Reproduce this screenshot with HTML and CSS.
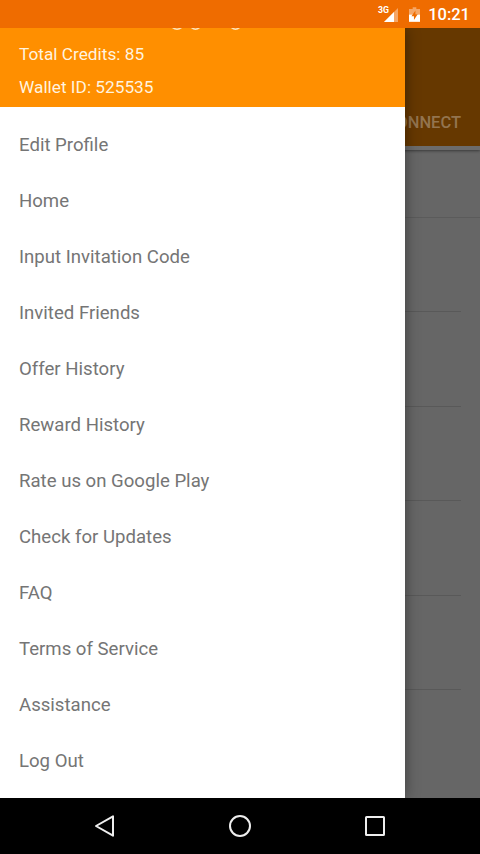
FILE: index.html
```html
<!DOCTYPE html>
<html lang="en">
<head>
<meta charset="utf-8">
<title>Menu</title>
<link rel="stylesheet" href="styles.css">
</head>
<body>
<div class="phone">
  <header class="status">
    <svg class="signal" width="20" height="18" viewBox="0 0 20 18">
      <path d="M20 3V17H6Z" fill="#fff" opacity=".4"/>
      <path d="M16 7V17H6Z" fill="#fff"/>
      <text class="network" x="0" y="8" textLength="11" lengthAdjust="spacingAndGlyphs">3G</text>
    </svg>
    <svg class="battery" width="11" height="15" viewBox="0 0 12 16">
      <path d="M4 0H8V2H12V8H0V2H4Z" fill="#fff" opacity=".4"/>
      <path d="M0 8H12V16H0Z" fill="#fff"/>
      <path d="M7 3.5L2.7 10H5.4V14L9.5 7.8H7Z" fill="#ef6c00"/>
    </svg>
    <span class="clock">10:21</span>
  </header>
  <main class="screen">
    <div class="page">
      <div class="toolbar"><span class="tab">CONNECT</span></div>
      <div class="strip"></div>
      <div class="intro"></div>
      <div class="rows">
        <div class="row"></div>
        <div class="row"></div>
        <div class="row"></div>
        <div class="row"></div>
        <div class="row"></div>
      </div>
    </div>
    <aside class="drawer">
      <div class="account">
        <svg class="descenders" width="72" height="3" viewBox="0 0 72 3">
          <path d="M1 -1Q6 3.5 11 -1M20 -1Q24.500 3.500 29 -1M60 -1Q64.500 3.500 69 -1" fill="none" stroke="#ffe3bd" stroke-width="1.600"/>
        </svg>
        <p>Total Credits: 85</p>
        <p>Wallet ID: 525535</p>
      </div>
      <nav class="menu">
        <a>Edit Profile</a>
        <a>Home</a>
        <a>Input Invitation Code</a>
        <a>Invited Friends</a>
        <a>Offer History</a>
        <a>Reward History</a>
        <a>Rate us on Google Play</a>
        <a>Check for Updates</a>
        <a>FAQ</a>
        <a>Terms of Service</a>
        <a>Assistance</a>
        <a>Log Out</a>
      </nav>
    </aside>
  </main>
  <footer class="navbar">
    <svg width="24" height="24" viewBox="0 0 24 24"><path d="M20 2.300V21.700L3 12Z"/></svg>
    <svg width="24" height="24" viewBox="0 0 24 24"><circle cx="12" cy="12" r="10"/></svg>
    <svg width="24" height="24" viewBox="0 0 24 24"><rect x="3" y="3" width="18" height="18" rx=".5"/></svg>
  </footer>
</div>
</body>
</html>
```
FILE: styles.css
```css
* { box-sizing: border-box; }
body {
  margin: 0;
  font-family: Roboto, "Liberation Sans", sans-serif;
}
p { margin: 0; }
.phone {
  width: 480px;
  height: 854px;
  display: flex;
  flex-direction: column;
  overflow: hidden;
}
.status {
  height: 28px;
  flex: none;
  display: flex;
  align-items: flex-start;
  justify-content: flex-end;
  padding-right: 10px;
  background: #ef6c00;
  color: #fff;
}
.signal {
  margin: 5px 11px 0 0;
  overflow: visible;
}
.network {
  font-size: 9.500px;
  font-weight: 700;
  fill: #fff;
}
.battery { margin: 7px 8px 0 0; }
.clock {
  font-size: 16.500px;
  font-weight: 500;
  line-height: 20px;
  margin-top: 5px;
}
.screen {
  position: relative;
  flex: 1;
  min-height: 0;
  overflow: hidden;
}
.page {
  height: 100%;
  background: #666;
}
.toolbar {
  height: 118px;
  display: flex;
  align-items: flex-end;
  justify-content: flex-end;
  padding: 0 19px 13px 0;
  background: #663800;
}
.tab {
  font-size: 16.500px;
  font-weight: 500;
  line-height: 20px;
  color: #93744f;
}
.strip {
  height: 4px;
  background: #6c6c6c;
  box-shadow: 0 1px 3px rgba(0, 0, 0, .45);
  clip-path: inset(0 0 -5px 0);
}
.intro {
  height: 68px;
  border-bottom: 1px solid #5b5b5b;
}
.rows { padding: 0 19px; }
.row {
  height: 94.400px;
  border-bottom: 1px solid #595959;
}
.drawer {
  position: absolute;
  top: 0;
  left: 0;
  width: 405px;
  height: 100%;
  background: #fff;
  box-shadow: 0 0 14px rgba(0, 0, 0, .4);
}
.account {
  position: relative;
  height: 78.500px;
  padding: 10px 19px 0;
  background: #ff8f00;
  color: #fff3df;
  font-size: 17.250px;
  line-height: 33px;
}
.descenders {
  position: absolute;
  top: 0;
  left: 171px;
}
.account p { height: 33px; }
.menu {
  display: flex;
  flex-direction: column;
  padding-top: 10.500px;
}
.menu a {
  height: 56px;
  padding-left: 19px;
  line-height: 56px;
  font-size: 18.600px;
  color: #757575;
}
.navbar {
  height: 56px;
  flex: none;
  display: flex;
  align-items: center;
  justify-content: center;
  gap: 111px;
  background: #000;
}
.navbar svg {
  fill: none;
  stroke: #eee;
  stroke-width: 2;
  stroke-linejoin: round;
}
```
